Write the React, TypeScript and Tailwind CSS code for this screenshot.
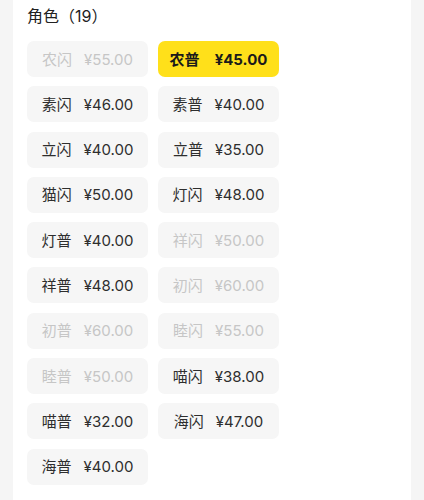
import React from 'react';

interface Role {
  name: string;
  price: string;
  disabled?: boolean;
  selected?: boolean;
}

const roles: Role[] = [
  { name: '农闪', price: '¥55.00', disabled: true },
  { name: '农普', price: '¥45.00', selected: true },
  { name: '素闪', price: '¥46.00' },
  { name: '素普', price: '¥40.00' },
  { name: '立闪', price: '¥40.00' },
  { name: '立普', price: '¥35.00' },
  { name: '猫闪', price: '¥50.00' },
  { name: '灯闪', price: '¥48.00' },
  { name: '灯普', price: '¥40.00' },
  { name: '祥闪', price: '¥50.00', disabled: true },
  { name: '祥普', price: '¥48.00' },
  { name: '初闪', price: '¥60.00', disabled: true },
  { name: '初普', price: '¥60.00', disabled: true },
  { name: '睦闪', price: '¥55.00', disabled: true },
  { name: '睦普', price: '¥50.00', disabled: true },
  { name: '喵闪', price: '¥38.00' },
  { name: '喵普', price: '¥32.00' },
  { name: '海闪', price: '¥47.00' },
  { name: '海普', price: '¥40.00' },
];

const RoleChip: React.FC<{ role: Role }> = ({ role }) => {
  let tone = 'bg-[#f6f6f6] text-[#2e2e2e]';
  if (role.selected) tone = 'bg-[#ffe01a] text-[#1a1a1a] font-bold gap-[15px]';
  else tone += ' gap-[12px]';
  if (role.disabled) tone = 'bg-[#f6f6f6] text-[#c6c6c6] gap-[12px]';
  return (
    <div
      className={`w-[121px] h-9 rounded-[7px] flex items-center justify-center text-[15px] leading-none ${tone}`}
    >
      <span>{role.name}</span>
      <span>{role.price}</span>
    </div>
  );
};

export default function App() {
  return (
    <div
      className="min-h-[500px] bg-[#f5f5f5] px-[13px]"
      style={{ fontFamily: 'Inter, "Noto Sans CJK SC", sans-serif' }}
    >
      <div className="bg-white min-h-[500px] pl-[14px] pt-[5px]">
        <h2 className="text-[16px] leading-[22px] text-[#222222]">角色（19）</h2>
        <div className="mt-[14px] grid grid-cols-[121px_121px] gap-x-[10px] gap-y-[9.3px]">
          {roles.map((r) => (
            <RoleChip key={r.name} role={r} />
          ))}
        </div>
      </div>
    </div>
  );
}
